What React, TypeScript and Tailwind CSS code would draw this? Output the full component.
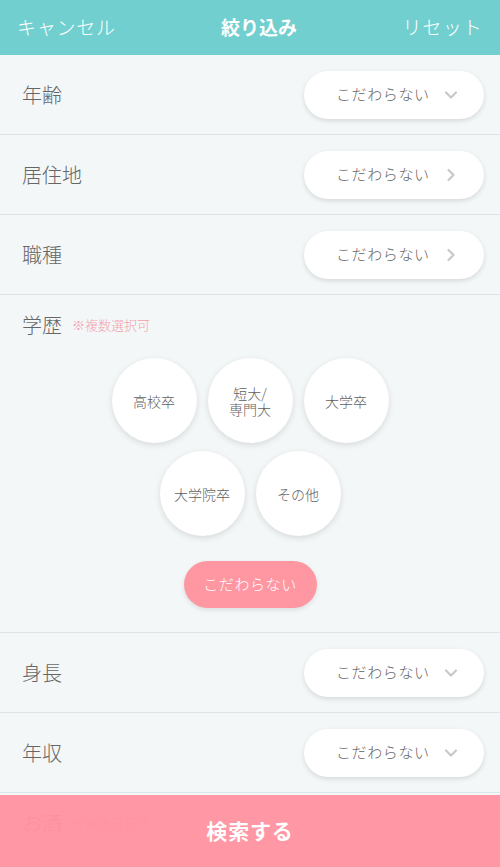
import { ChevronDown, ChevronRight } from "lucide-react"

const font = { fontFamily: '"Noto Sans CJK JP", "Noto Sans", sans-serif' }

function SelectRow({ label, icon }: { label: string; icon: "down" | "right" }) {
  return (
    <div className="flex h-[80px] items-center justify-between border-b border-[#dde4e6] pl-[22px] pr-[16px]">
      <span className="text-[20px] font-light text-[#666]">{label}</span>
      <button className="flex h-[48px] w-[180px] items-center rounded-full bg-white pl-[32px] pr-[23px] shadow-[0_2px_5px_rgba(0,0,0,0.12)]">
        <span className="flex-1 text-left text-[15px] font-light tracking-[0.04em] text-[#666]">こだわらない</span>
        {icon === "down" ? (
          <ChevronDown className="h-[20px] w-[20px] text-[#c8c8c8]" strokeWidth={2.6} />
        ) : (
          <ChevronRight className="h-[20px] w-[20px] text-[#c8c8c8]" strokeWidth={2.6} />
        )}
      </button>
    </div>
  )
}

function Circle({ children }: { children: React.ReactNode }) {
  return (
    <div className="flex h-[85px] w-[85px] items-center justify-center rounded-full bg-white text-center text-[14px] font-light leading-[16px] text-[#606060] shadow-[0_2px_6px_rgba(0,0,0,0.12)]">
      {children}
    </div>
  )
}

function MultiSection({ label, items }: { label: string; items: React.ReactNode[][] }) {
  return (
    <div className="border-b border-[#dde4e6] pb-[24px]">
      <div className="flex items-center pl-[22px] pt-[15px]">
        <span className="text-[20px] font-light text-[#666]">{label}</span>
        <span className="ml-[10px] text-[13px] font-light text-[#f5a0ad]">※複数選択可</span>
      </div>
      <div className="mt-[18px] flex flex-col items-center gap-[8px]">
        {items.map((row, i) => (
          <div key={i} className="flex gap-[11px]">
            {row.map((c, j) => (
              <Circle key={j}>{c}</Circle>
            ))}
          </div>
        ))}
      </div>
      <div className="mt-[25px] flex justify-center">
        <button className="h-[47px] w-[133px] rounded-full bg-[#ff97a3] text-[15px] font-light tracking-[0.04em] text-white shadow-[0_2px_5px_rgba(0,0,0,0.1)]">
          こだわらない
        </button>
      </div>
    </div>
  )
}

export default function App() {
  return (
    <div className="relative h-[867px] w-[500px] overflow-hidden bg-[#f3f7f8]" style={font}>
      <header className="flex h-[55px] items-center justify-between bg-[#72cfcf] px-[17px] text-[19px] text-white">
        <span className="font-light tracking-[0.04em]">キャンセル</span>
        <span className="font-bold">絞り込み</span>
        <span className="font-light tracking-[0.06em]">リセット</span>
      </header>
      <SelectRow label="年齢" icon="down" />
      <SelectRow label="居住地" icon="right" />
      <SelectRow label="職種" icon="right" />
      <MultiSection
        label="学歴"
        items={[
          [
            "高校卒",
            <span key="a">
              短大/
              <br />
              専門大
            </span>,
            "大学卒",
          ],
          ["大学院卒", "その他"],
        ]}
      />
      <SelectRow label="身長" icon="down" />
      <SelectRow label="年収" icon="down" />
      <MultiSection label="お酒" items={[["飲まない", "ときどき", "飲む"]]} />
      <div className="absolute bottom-0 left-0 flex h-[72px] w-full items-center justify-center bg-[#ff93a0]/[0.96]">
        <span className="text-[21px] font-bold tracking-[0.04em] text-white">検索する</span>
      </div>
    </div>
  )
}
